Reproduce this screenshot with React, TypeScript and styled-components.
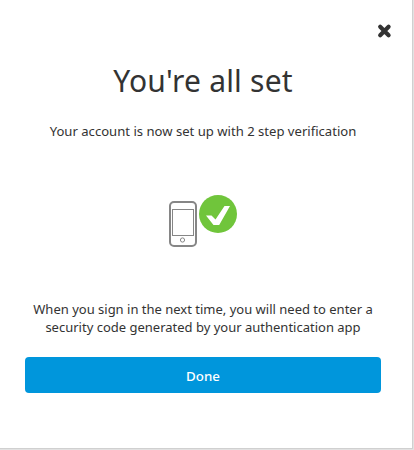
import React from "react";
import styled, { createGlobalStyle } from "styled-components";

const GlobalStyle = createGlobalStyle`
  * { box-sizing: border-box; }
  body { margin: 0; background: #e2e2e2; }
`;

const Page = styled.main`
  width: 414px;
  height: 450px;
  overflow: hidden;
  font-family: "Noto Sans", "Open Sans", sans-serif;
  color: #333;
`;

const Dialog = styled.section`
  display: flex;
  flex-direction: column;
  width: 413px;
  height: 449px;
  padding: 22px 31px 0 25px;
  background: #fff;
  border-right: 1px solid #d0d0d0;
  border-bottom: 1px solid #d0d0d0;
`;

const CloseButton = styled.button`
  align-self: flex-end;
  display: flex;
  width: 18px;
  height: 18px;
  margin-right: -12px;
  padding: 0;
  border: 0;
  background: none;
  color: #333;
`;

const Title = styled.h1`
  margin: 21px 0 0;
  font-size: 30px;
  line-height: 40px;
  font-weight: 400;
  letter-spacing: 0.2px;
  text-align: center;
  white-space: nowrap;
`;

const Message = styled.p<{ $top: number; $size: number }>`
  margin: ${({ $top }) => $top}px -10px 0;
  font-size: ${({ $size }) => $size}px;
  line-height: 18px;
  text-align: center;
  white-space: nowrap;
`;

const Illustration = styled.div`
  display: flex;
  justify-content: center;
  height: 54px;
  margin-top: 54px;
`;

const DoneButton = styled.button`
  height: 36px;
  margin-top: 21px;
  padding: 2px 0 0;
  border: 0;
  border-radius: 4px;
  background: #0096dc;
  color: #fff;
  font: 500 13.3px/20px "Noto Sans", "Open Sans", sans-serif;
`;

export default function App() {
  return (
    <>
      <GlobalStyle />
      <Page>
        <Dialog role="dialog" aria-labelledby="title">
          <CloseButton aria-label="Close">
            <svg width="18" height="18" viewBox="0 0 18 18">
              <path d="M5.2 4.8L13.6 13.2M13.6 4.8L5.2 13.2" stroke="currentColor" strokeWidth="4.2" strokeLinecap="round" />
            </svg>
          </CloseButton>
          <Title id="title">You're all set</Title>
          <Message $top={21} $size={13.1}>
            Your account is now set up with 2 step verification
          </Message>
          <Illustration>
            <svg width="70" height="54" viewBox="0 0 70 54" fill="none">
              <rect x="2" y="8" width="26" height="44" rx="4" stroke="#868686" strokeWidth="2" />
              <rect x="4.5" y="15.5" width="21" height="26" stroke="#868686" />
              <circle cx="14.5" cy="46" r="2.1" stroke="#868686" />
              <circle cx="50" cy="20" r="19" fill="#70c53b" />
              <path d="M38 21.5H43.5L47.5 25.5L56.5 12H62L51.2 31H45.5Z" fill="#fff" />
            </svg>
          </Illustration>
          <Message $top={52} $size={13}>
            When you sign in the next time, you will need to enter a<br />
            security code generated by your authentication app
          </Message>
          <DoneButton>Done</DoneButton>
        </Dialog>
      </Page>
    </>
  );
}
